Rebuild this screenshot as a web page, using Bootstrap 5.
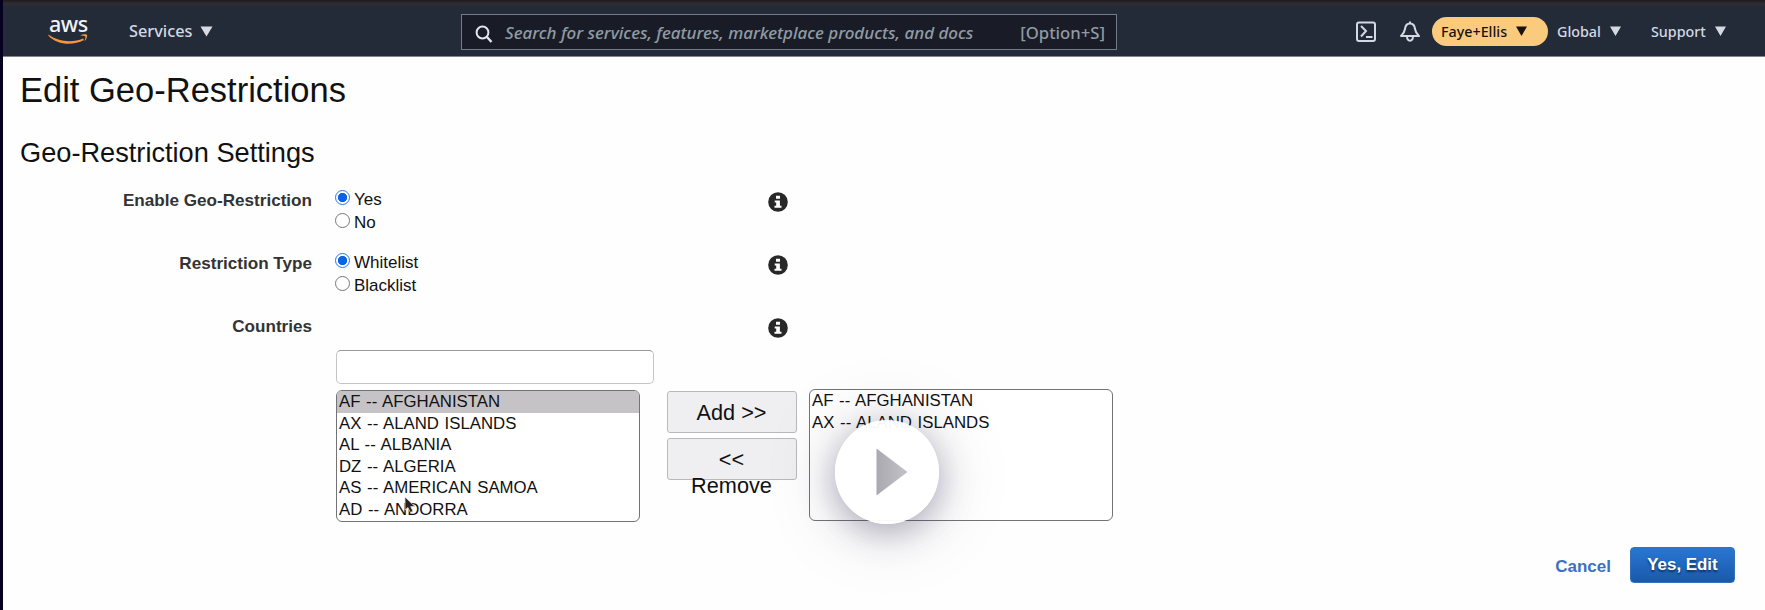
<!DOCTYPE html>
<html lang="en">
<head>
<meta charset="utf-8">
<title>Edit Geo-Restrictions</title>
<link href="https://cdn.jsdelivr.net/npm/bootstrap@5.3.0/dist/css/bootstrap.min.css" rel="stylesheet">
<style>
body{font-family:"Liberation Sans",Arial,sans-serif;background:#fefefe;color:#111;height:610px;overflow:hidden;border-left:3px solid #05011f;font-size:17px}
.tabstrip{height:6px;background:linear-gradient(#201e23 0 1px,#2f2c31 3px)}
.topnav{height:51px;background:#232b38;border-bottom:1px solid #84858c;font-family:"Noto Sans",sans-serif;color:#d3d9e3;font-size:14.3px;font-weight:500;padding:0}
.topnav svg{display:block;flex:none}
.brand{width:40px;margin-left:45px}
.brand-name{font-size:21.5px;line-height:22px;letter-spacing:-.5px;color:#f1f1f5;font-weight:500;padding-left:1px;margin-top:7px}
.brand svg{margin-top:-1px}
.services{font-size:16.3px;margin-left:41px;width:84px;margin-top:1px}
.searchbox{width:656px;height:36px;margin-left:248px;margin-top:1px;background:#191c26;border:1px solid #737c8b;color:#8f9ba4;font-size:16.7px;padding:0 11px 0 13px}
.searchbox em,.searchbox span{position:relative;top:1px}
.searchbox em{margin-left:12px;font-size:17px;letter-spacing:-.02px}
.account{width:116px;height:29px;background:#fbcb7d;color:#17130f;padding:0 21px 0 9px}
.nav-label{position:relative;top:1px}
.main{padding:0 30px 0 17px}
h1{font-size:34.5px;line-height:40px;margin:13px 0 0;font-weight:400;color:#111}
h2{font-size:27.2px;line-height:32px;margin:27px 0 0;font-weight:400;color:#111}
.settings{padding-top:19px}
.form-line{height:63px}
.field-name{width:292px;font-weight:700;color:#333;text-align:right;font-size:17.1px;line-height:22px;padding-top:2px}
.choices{width:433px;margin-left:23px;padding-top:1px}
.choice{height:22.5px;line-height:22px}
.choice input{appearance:none;width:15px;height:15px;border:1px solid #777;border-radius:50%;margin:1px 4px 0 0;background:#fff}
.choice input:checked{border:1.5px solid #2878e8;background:radial-gradient(circle,#0b63e5 0 4.3px,#fff 5px)}
.info{margin-top:4px;display:block}
.filter{width:318px;height:34px;border:1px solid #c4c4c7;border-top-color:#99999c;border-radius:5px;background:#fff;padding:0}
.picker{margin-left:316px}
.country-list{width:304px;height:132px;border:1px solid #737377;border-radius:6px;background:#fff;font-size:16.8px;word-spacing:1px;line-height:21.6px;overflow:hidden;padding:0;margin:0;list-style:none}
.country-list li{padding-left:2px;height:21.6px;white-space:pre}
.country-list .chosen{background:#c6c3c7}
.movers{width:130px;margin:2px 12px 0 27px}
.mover{height:42px;width:130px;border:1px solid #b9b8bd;border-radius:3px;background:#efeef1;font-size:21.7px;line-height:26px;padding:8px 22px 6px 21px;color:#111;margin-bottom:5px;text-align:center}
.play{position:absolute;left:26px;top:31px;width:104px;height:104px;border-radius:50%;background:rgba(255,255,255,.96);box-shadow:0 8px 34px rgba(45,40,75,.36),0 4px 80px rgba(45,40,75,.15)}
.pointer{position:absolute;left:68px;top:106px}
.actions{margin-top:25px;gap:19px}
.cancel{color:#3d70c4;font-weight:700;font-size:17px;text-decoration:none;padding-top:3px}
.confirm{width:105px;height:36px;border:1px solid #3671bd;border-radius:4px;background:linear-gradient(#2b76d2,#1859ab);color:#fff;font-weight:700;font-size:16.9px;text-shadow:0 2px 2px rgba(0,0,0,.5);padding:0}
</style>
</head>
<body>
<svg class="d-none"><defs>
<symbol id="info" viewBox="0 0 20 20"><circle cx="10" cy="10" r="9.8" fill="#282828"/><path d="M8 3.800h4v3H8zM6.700 8.400h5.200v5.400h1.600v2H6.500v-2h1.700v-3.400H6.700z" fill="#fff"/></symbol>
</defs></svg>
<div class="tabstrip"></div>
<nav class="topnav navbar flex-nowrap justify-content-start align-items-center">
  <div class="brand align-self-start">
    <div class="brand-name">aws</div>
    <svg width="40" height="11" viewBox="0 0 40 11"><path d="M.5.5C10 8 25 9 35 4.500l1 1.500C25 12 9 11 .5 1.700z" fill="#f2983a"/><path d="M32 1.600c3-1.600 6-1.400 7-.8.6 1.700-.4 4.700-2.600 6.700.6-2 1.400-4.200 1-5-1-.8-3.200-.8-5.400-.9z" fill="#f2983a"/></svg>
  </div>
  <div class="services d-flex align-items-center justify-content-between">Services <svg width="13" height="11" viewBox="0 0 13 11"><path d="M.5.5h12l-6 10z" fill="#d7dce4"/></svg></div>
  <div class="searchbox d-flex align-items-center">
    <svg width="18" height="18" viewBox="0 0 18 18" class="mt-1"><circle cx="7.500" cy="7.500" r="5.900" fill="none" stroke="#e4e6ec" stroke-width="2"/><path d="M12 12l4.500 5" stroke="#e4e6ec" stroke-width="2.400"/></svg>
    <em>Search for services, features, marketplace products, and docs</em><span class="ms-auto">[Option+S]</span>
  </div>
  <svg width="20" height="21" viewBox="0 0 20 21" style="margin-left:239px" fill="none" stroke="#d3d9e3" stroke-width="2"><rect x="1" y="1.500" width="18" height="18.500" rx="2"/><path d="M5 5l5 5-5 5.500M10 16h6.500"/></svg>
  <svg width="20" height="21" viewBox="0 0 20 21" style="margin-left:24px" fill="none" stroke="#d3d9e3" stroke-width="2"><path d="M10 .500v2M1 15c3-2.500 3.500-4 4-7 .4-3.500 2-5.500 5-5.500s4.600 2 5 5.500c.5 3 1 4.500 4 7zM7 15.500c.2 5.500 5.800 5.500 6 0" stroke-linejoin="round"/></svg>
  <div class="account rounded-pill d-flex align-items-center justify-content-between" style="margin-left:12px"><span class="nav-label">Faye+Ellis</span> <svg width="11" height="10" viewBox="0 0 11 10"><path d="M0 .5h11L5.500 10z" fill="#17130f"/></svg></div>
  <div class="d-flex align-items-center justify-content-between" style="margin-left:9px;width:64px"><span class="nav-label">Global</span> <svg width="11" height="10" viewBox="0 0 11 10"><path d="M0 .5h11L5.500 10z" fill="#d3d9e3"/></svg></div>
  <div class="d-flex align-items-center justify-content-between" style="margin-left:30px;width:75px"><span class="nav-label">Support</span> <svg width="11" height="10" viewBox="0 0 11 10"><path d="M0 .5h11L5.500 10z" fill="#d3d9e3"/></svg></div>
</nav>
<main class="main">
  <h1>Edit Geo-Restrictions</h1>
  <h2>Geo-Restriction Settings</h2>
  <form class="settings">
    <div class="form-line d-flex align-items-start">
      <div class="field-name">Enable Geo-Restriction</div>
      <div class="choices">
        <label class="choice d-flex"><input type="radio" name="enabled" checked>Yes</label>
        <label class="choice d-flex"><input type="radio" name="enabled">No</label>
      </div>
      <svg class="info" width="20" height="20"><use href="#info"/></svg>
    </div>
    <div class="form-line d-flex align-items-start">
      <div class="field-name">Restriction Type</div>
      <div class="choices">
        <label class="choice d-flex"><input type="radio" name="kind" checked>Whitelist</label>
        <label class="choice d-flex"><input type="radio" name="kind">Blacklist</label>
      </div>
      <svg class="info" width="20" height="20"><use href="#info"/></svg>
    </div>
    <div class="d-flex align-items-start" style="height:36px">
      <div class="field-name">Countries</div>
      <div class="choices"></div>
      <svg class="info" width="20" height="20"><use href="#info"/></svg>
    </div>
    <div class="picker">
      <input type="text" class="filter d-block" aria-label="Filter countries">
      <div class="d-flex align-items-start" style="margin-top:5px">
        <div class="position-relative" style="margin-top:1px">
          <ul class="country-list">
            <li class="chosen">AF -- AFGHANISTAN</li><li>AX -- ALAND ISLANDS</li><li>AL -- ALBANIA</li><li>DZ -- ALGERIA</li><li>AS -- AMERICAN SAMOA</li><li>AD -- ANDORRA</li>
          </ul>
          <svg class="pointer" width="14" height="18" viewBox="0 0 14 18"><path d="M1 1v13l3-2.500 2.400 5 2.600-1.200-2.300-4.700h4.300z" fill="#222" stroke="#ddd" stroke-width=".8"/></svg>
        </div>
        <div class="movers">
          <div class="mover" role="button">Add &gt;&gt;</div>
          <div class="mover" role="button">&lt;&lt; Remove</div>
        </div>
        <div class="position-relative">
          <ul class="country-list"><li>AF -- AFGHANISTAN</li><li>AX -- ALAND ISLANDS</li></ul>
          <div class="play"><svg width="104" height="104" viewBox="0 0 104 104"><defs><linearGradient id="tri"><stop stop-color="#aaa9b0"/><stop offset="1" stop-color="#c3c2c9"/></linearGradient></defs><path d="M41.500 28.500v47l31-23.500z" fill="url(#tri)"/></svg></div>
        </div>
      </div>
    </div>
    <div class="actions d-flex justify-content-end align-items-center">
      <a class="cancel" href="#">Cancel</a>
      <button type="button" class="confirm">Yes, Edit</button>
    </div>
  </form>
</main>
<script src="https://cdn.jsdelivr.net/npm/bootstrap@5.3.0/dist/js/bootstrap.bundle.min.js"></script>
</body>
</html>
